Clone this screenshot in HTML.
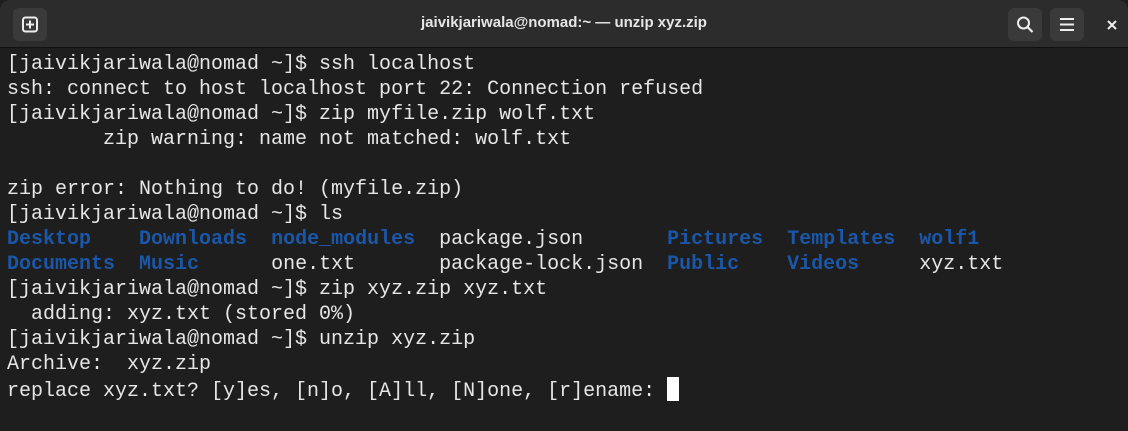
<!DOCTYPE html>
<html><head><style>
html,body{margin:0;padding:0;width:1128px;height:431px;overflow:hidden;background:#1e1e1e;}
.hdr{position:absolute;left:0;top:0;width:1128px;height:47px;background:#2c2c2c;border-bottom:1px solid #111;border-radius:10px 10px 0 0;}
.btn{position:absolute;top:8px;width:34px;height:33px;background:#3a3a3a;border-radius:6px;}
.title{position:absolute;left:0;right:0;top:14px;text-align:center;color:#e6e6e6;font:bold 15px "Liberation Sans",sans-serif;}
pre{position:absolute;left:7px;top:52px;margin:0;font:20px/25px "Liberation Mono",monospace;color:#e6e6e6;}
b{color:#1b57a8;}
.cur{display:inline-block;width:12px;height:24px;background:#fff;vertical-align:-5px;}
</style></head><body>
<div class="hdr">
<div class="btn" style="left:13px"><svg width="34" height="33"><rect x="10" y="9.5" width="14" height="14" rx="2.5" fill="none" stroke="#eee" stroke-width="2"/><path d="M17 12.5v8M13 16.5h8" stroke="#eee" stroke-width="2"/></svg></div>
<div class="title">jaivikjariwala@nomad:~ — unzip xyz.zip</div>
<div class="btn" style="left:1008px"><svg width="34" height="33"><circle cx="15.5" cy="15" r="5.5" fill="none" stroke="#eee" stroke-width="2"/><path d="M19.5 19l5 5" stroke="#eee" stroke-width="2.2"/></svg></div>
<div class="btn" style="left:1050px"><svg width="34" height="33"><path d="M10 11h14M10 16.5h14M10 22h14" stroke="#eee" stroke-width="2"/></svg></div>
<svg style="position:absolute;left:1106px;top:19px" width="12" height="12"><path d="M2 2l8 8M10 2l-8 8" stroke="#eee" stroke-width="2"/></svg>
</div>
<pre>[jaivikjariwala@nomad ~]$ ssh localhost
ssh: connect to host localhost port 22: Connection refused
[jaivikjariwala@nomad ~]$ zip myfile.zip wolf.txt
        zip warning: name not matched: wolf.txt

zip error: Nothing to do! (myfile.zip)
[jaivikjariwala@nomad ~]$ ls
<b>Desktop</b>    <b>Downloads</b>  <b>node_modules</b>  package.json       <b>Pictures</b>  <b>Templates</b>  <b>wolf1</b>
<b>Documents</b>  <b>Music</b>      one.txt       package-lock.json  <b>Public</b>    <b>Videos</b>     xyz.txt
[jaivikjariwala@nomad ~]$ zip xyz.zip xyz.txt
  adding: xyz.txt (stored 0%)
[jaivikjariwala@nomad ~]$ unzip xyz.zip
Archive:  xyz.zip
replace xyz.txt? [y]es, [n]o, [A]ll, [N]one, [r]ename: <span class="cur"></span></pre>
</body></html>
